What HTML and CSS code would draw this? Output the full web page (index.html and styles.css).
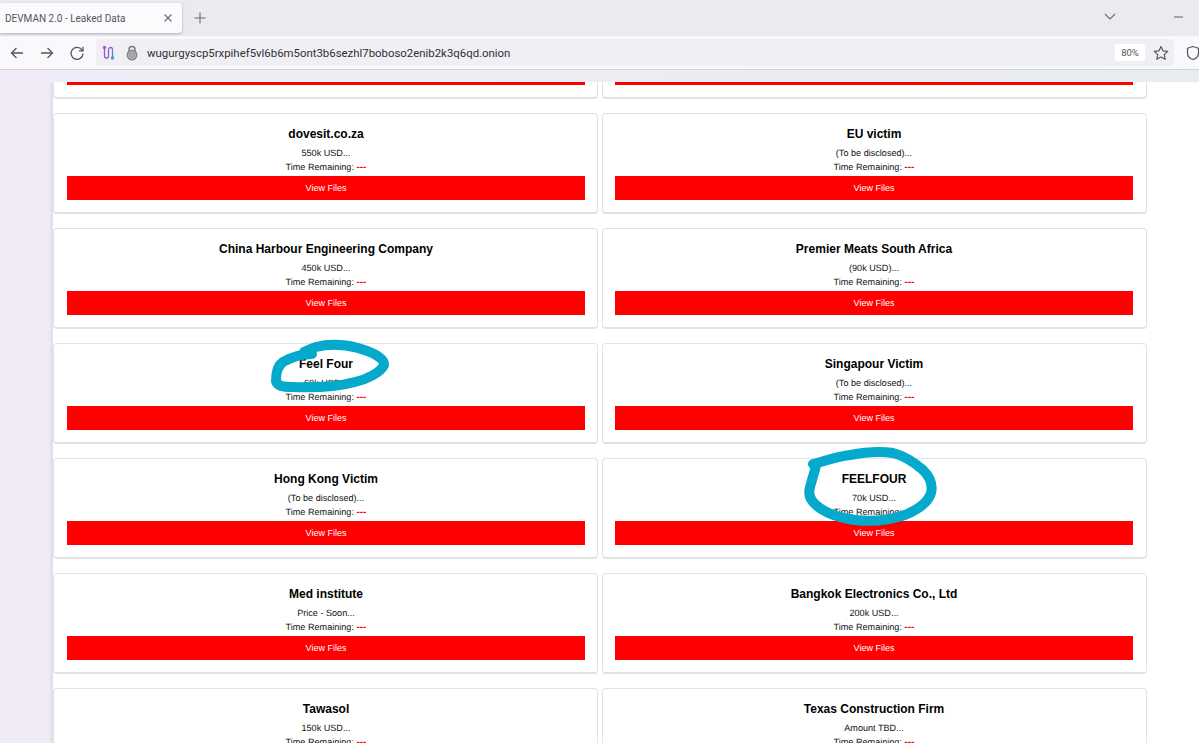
FILE: index.html
```html
<!DOCTYPE html>
<html lang="en">
<head>
<meta charset="utf-8">
<title>DEVMAN 2.0 - Leaked Data</title>
<link rel="stylesheet" href="styles.css">
</head>
<body>
<header class="chrome">
  <div class="tabbar">
    <div class="tab">
      <span class="tab-title">DEVMAN 2.0 - Leaked Data</span>
      <svg class="ico-close" width="10" height="10" viewBox="0 0 10 10"><path d="M1.5 1.5l7 7M8.5 1.5l-7 7"/></svg>
    </div>
    <svg class="ico-plus" width="12" height="12" viewBox="0 0 12 12"><path d="M6 .5v11M.5 6h11"/></svg>
    <div class="tab-actions">
      <svg class="ico-chev" width="12" height="7" viewBox="0 0 12 7"><path d="M1 1l5 5 5-5"/></svg>
      <svg class="ico-min" width="9" height="2" viewBox="0 0 9 2"><path d="M0 1h9"/></svg>
    </div>
  </div>
  <div class="toolbar">
    <div class="nav">
      <svg class="ico" width="16" height="16" viewBox="0 0 16 16"><path d="M14 8H2.500M7.500 3L2.500 8l5 5"/></svg>
      <svg class="ico" width="16" height="16" viewBox="0 0 16 16"><path d="M2 8h11.500M8.500 3l5 5-5 5"/></svg>
      <svg class="ico" width="16" height="16" viewBox="0 0 16 16"><path d="M13.300 5.500A6 6 0 1 0 14 8.500M14 1.800v4h-4"/></svg>
    </div>
    <div class="urlbar">
      <svg class="ico-tor" width="14" height="16" viewBox="0 0 14 16"><path class="tor-a" d="M2.500 3v8a2 2 0 0 0 4 0V4.500a2 2 0 0 1 4 0"/><path class="tor-b" d="M10.500 4.500V12"/><circle class="tor-dot-a" cx="2.500" cy="2.500" r="1.700"/><circle class="tor-dot-b" cx="10.500" cy="13" r="1.700"/></svg>
      <svg class="ico-lock" width="12" height="16" viewBox="0 0 12 16"><path class="lock-arc" d="M3 7V4.500a3 3 0 0 1 6 0V7"/><circle class="lock-body" cx="6" cy="10" r="5.500"/><circle class="lock-ring" cx="6" cy="10" r="3.400"/><circle class="lock-ring" cx="6" cy="10" r="1.400"/></svg>
      <span class="url">wugurgyscp5rxpihef5vl6b6m5ont3b6sezhl7boboso2enib2k3q6qd.onion</span>
      <span class="zoom-badge">80%</span>
      <svg class="ico-star" width="16" height="16" viewBox="0 0 16 16"><path d="M8 1.500l2 4.300 4.700.6-3.400 3.200.9 4.700L8 12l-4.200 2.300.9-4.700L1.300 6.400 6 5.800z"/></svg>
    </div>
    <svg class="ico-shield" width="14" height="16" viewBox="0 0 14 16"><path d="M7 1.500l5.500 1.700v5c0 3.300-2.500 5.300-5.500 6.300-3-1-5.500-3-5.500-6.300v-5z"/></svg>
  </div>
</header>
<div class="band"></div>
<div class="page">
  <main class="content">
    <section class="grid">
      <article class="card"><h2></h2><p class="price"></p><p class="time"></p><a class="btn"></a></article>
      <article class="card"><h2></h2><p class="price"></p><p class="time"></p><a class="btn"></a></article>
      <article class="card"><h2>dovesit.co.za</h2><p class="price">550k USD...</p><p class="time">Time Remaining: <b>---</b></p><a class="btn">View Files</a></article>
      <article class="card"><h2>EU victim</h2><p class="price">(To be disclosed)...</p><p class="time">Time Remaining: <b>---</b></p><a class="btn">View Files</a></article>
      <article class="card"><h2>China Harbour Engineering Company</h2><p class="price">450k USD...</p><p class="time">Time Remaining: <b>---</b></p><a class="btn">View Files</a></article>
      <article class="card"><h2>Premier Meats South Africa</h2><p class="price">(90k USD)...</p><p class="time">Time Remaining: <b>---</b></p><a class="btn">View Files</a></article>
      <article class="card"><h2>Feel Four</h2><p class="price">60k USD...</p><p class="time">Time Remaining: <b>---</b></p><a class="btn">View Files</a></article>
      <article class="card"><h2>Singapour Victim</h2><p class="price">(To be disclosed)...</p><p class="time">Time Remaining: <b>---</b></p><a class="btn">View Files</a></article>
      <article class="card"><h2>Hong Kong Victim</h2><p class="price">(To be disclosed)...</p><p class="time">Time Remaining: <b>---</b></p><a class="btn">View Files</a></article>
      <article class="card"><h2>FEELFOUR</h2><p class="price">70k USD...</p><p class="time">Time Remaining: <b>---</b></p><a class="btn">View Files</a></article>
      <article class="card"><h2>Med institute</h2><p class="price">Price - Soon...</p><p class="time">Time Remaining: <b>---</b></p><a class="btn">View Files</a></article>
      <article class="card"><h2>Bangkok Electronics Co., Ltd</h2><p class="price">200k USD...</p><p class="time">Time Remaining: <b>---</b></p><a class="btn">View Files</a></article>
      <article class="card"><h2>Tawasol</h2><p class="price">150k USD...</p><p class="time">Time Remaining: <b>---</b></p><a class="btn">View Files</a></article>
      <article class="card"><h2>Texas Construction Firm</h2><p class="price">Amount TBD...</p><p class="time">Time Remaining: <b>---</b></p><a class="btn">View Files</a></article>
    </section>
  </main>
</div>
<svg class="scribble" width="1199" height="743" viewBox="0 0 1199 743">
  <path d="M312 354C300 354 290 358 283 362C277 366 276 374 276 381C277 386 283 387 292 387C315 388 340 386 355 382C368 379 381 372 384 365C385 358 372 352 358 348C342 344 328 344 316 347C312 348 308 350 304 352"/>
  <path d="M813 464C825 461 835 457 850 455C865 452 880 451 893 453C905 456 915 463 923 470C930 477 933 485 931 493C928 503 917 510 905 515C890 520 872 522 855 520C840 518 825 513 816 505C810 500 808 494 810 487C812 480 814 473 816 466"/>
</svg>
</body>
</html>
```

FILE: styles.css
```css
* { box-sizing: border-box; }
html, body { margin: 0; height: 743px; overflow: hidden; }
body { display: flex; flex-direction: column; background: #fff; font-family: "Liberation Sans", Arial, sans-serif; position: relative; }

.chrome { flex: none; font-family: Roboto, "Noto Sans", sans-serif; }
.tabbar { height: 36px; background: #ebeaef; display: flex; align-items: flex-start; padding-top: 3px; }
.tab { width: 182px; height: 30px; background: #fbfbfd; border-radius: 0 4px 4px 0; box-shadow: 0 1px 3px rgba(0,0,0,.25); display: flex; align-items: center; justify-content: space-between; padding: 0 9px 0 5px; }
.tab-title { font-size: 10px; color: #55555c; white-space: nowrap; }
.ico-close path, .ico-plus path, .ico-chev path, .ico-min path { fill: none; stroke: #6b6b72; stroke-width: 1.100; }
.ico-plus { margin: 9px 0 0 12px; }
.tab-actions { margin-left: auto; display: flex; align-items: center; gap: 58px; padding: 10px 0 0; margin-right: 16px; }
.ico-chev { margin-top: 0; }
.ico-min path { stroke: #8b8b92; stroke-width: 1.500; }

.toolbar { height: 34px; background: #f9f9fb; border-bottom: 1px solid #d3d3d8; display: flex; align-items: center; padding-left: 9px; }
.nav { display: flex; gap: 14px; width: 78px; flex: none; }
.ico path { fill: none; stroke: #55555c; stroke-width: 1.300; }
.urlbar { margin-left: 9px; width: 1078px; flex: none; height: 27px; background: #f0f0f4; border-radius: 4px; display: flex; align-items: center; padding-left: 6px; }
.ico-tor { flex: none; }
.tor-a { fill: none; stroke: #8e5ad6; stroke-width: 1.300; }
.tor-b { fill: none; stroke: #4a86d4; stroke-width: 1.300; }
.tor-dot-a { fill: #b04fd0; }
.tor-dot-b { fill: #3f9fd0; }
.ico-lock { flex: none; margin-left: 10px; }
.lock-arc { fill: none; stroke: #77777d; stroke-width: 1.500; }
.lock-body { fill: #8a8a90; }
.lock-ring { fill: none; stroke: #d0d0d4; stroke-width: .8; }
.url { font-size: 11.400px; color: #2f2f35; margin-left: 9px; white-space: nowrap; padding-top: 1px; }
.zoom-badge { margin-left: auto; width: 30px; height: 17px; background: #fff; border-radius: 2px; font-size: 9.500px; line-height: 18px; text-align: center; color: #55555c; margin-right: 8px; }
.ico-star { flex: none; margin-right: 5px; }
.ico-star path, .ico-shield path { fill: none; stroke: #55555c; stroke-width: 1.200; stroke-linejoin: round; }
.ico-shield { flex: none; margin-left: 12px; }

.band { flex: none; height: 12px; background: linear-gradient(90deg, #f1ecf7, #e8ecf1); }
.page { flex: 1; min-height: 0; overflow: hidden; display: flex; background: linear-gradient(100deg, #f1ebf6, #ecebf5); }
.content { flex: 1; min-width: 0; margin-left: 53px; background: #fff; box-shadow: -2px 0 3px rgba(0,0,0,.08); overflow: hidden; padding-right: 52px; }
.grid { display: grid; grid-template-columns: 545px 545px; column-gap: 4px; row-gap: 14px; margin-top: -84px; }

.card { height: 101px; background: #fff; border: 1px solid #e2e2e2; border-bottom-width: 2px; border-radius: 4px; padding: 12px 12px 0 13px; text-align: center; }
.card:nth-child(even) { padding: 12px 13px 0 12px; }
.card h2 { margin: 0 0 4px; height: 16px; font-size: 12px; line-height: 16px; font-weight: 700; color: #000; }
.card p { margin: 0; font-size: 9.100px; text-rendering: geometricPrecision; color: #111; }
.price { height: 14px; line-height: 14px; }
.time { height: 16px; line-height: 15px; }
.time b { color: #f00; font-size: 10px; }
.btn { display: block; height: 24px; background: #f00; color: #fff; font-size: 9px; line-height: 25px; }

.scribble { position: absolute; left: 0; top: 0; pointer-events: none; }
.scribble path { fill: none; stroke: #04a9cb; stroke-width: 10px; stroke-linecap: round; stroke-linejoin: round; }
```
